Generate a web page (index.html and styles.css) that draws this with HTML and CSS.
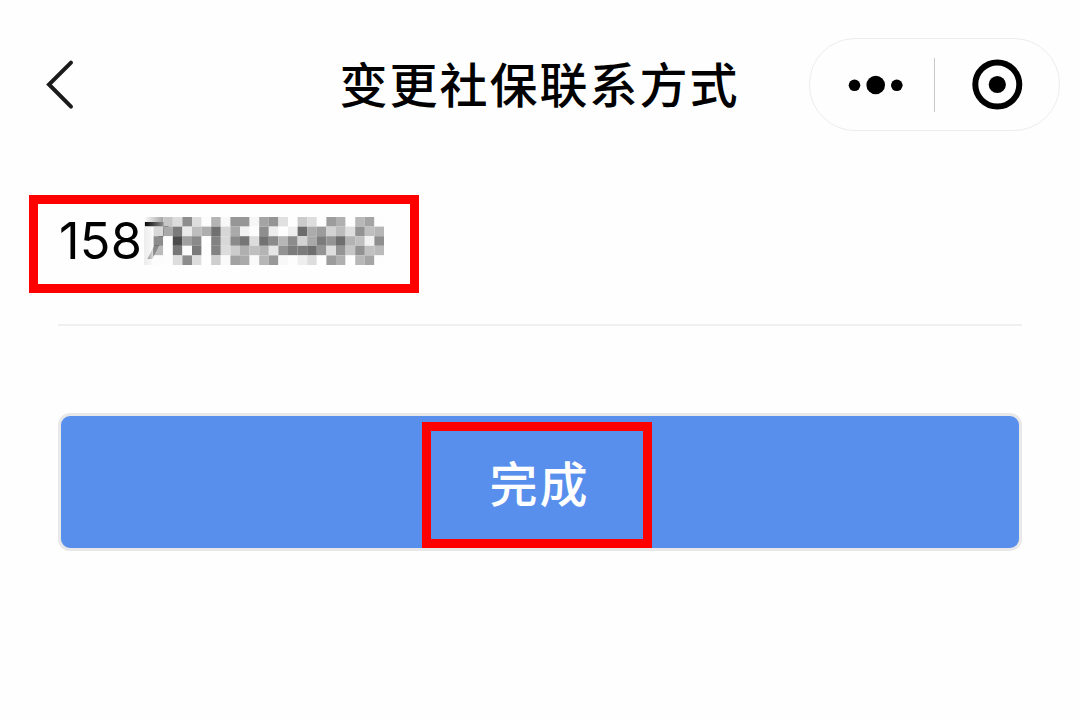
FILE: index.html
```html
<!DOCTYPE html>
<html lang="zh-CN">
<head>
    <meta charset="UTF-8">
    <meta name="viewport" content="width=device-width, initial-scale=1.0">
    <title>变更社保联系方式</title>
    <link rel="stylesheet" href="styles.css">
</head>
<body>
    <header class="navbar">
        <svg class="back" width="30" height="52" viewBox="0 0 30 52">
            <path d="M27 3.7 L5 25.5 L27 47.7" />
        </svg>
        <h1 class="title">变更社保联系方式</h1>
        <div class="capsule">
            <svg class="more" width="56" height="20" viewBox="0 0 56 20">
                <circle cx="6.5" cy="10.3" r="5.8" />
                <circle cx="27.7" cy="10" r="9.3" />
                <circle cx="48.8" cy="10.3" r="5.8" />
            </svg>
            <span class="divider"></span>
            <svg class="close" width="52" height="52" viewBox="0 0 52 52">
                <circle class="ring" cx="26.3" cy="25.5" r="22" />
                <circle cx="26.3" cy="25.5" r="8.6" />
            </svg>
        </div>
    </header>

    <main class="form">
        <div class="field">
            <div class="phone">
                <span class="digits">1587</span>
                <svg class="mosaic" id="mosaic" width="240" height="48" viewBox="0 0 240 48"></svg>
            </div>
        </div>
        <button class="submit"><span class="submit-label">完成</span></button>
    </main>

    <script>
        // gray level of every mosaic cell, "--" leaves the cell clear
        const rows = [
            "-- -- c6 dc 8e dd fd b4 f8 96 96 f6 a4 94 e0 fe cb dd fd 9c b0 fe b8 a4 fd",
            "-- d8 a9 7b ea bd ae 70 d6 aa f2 fd 8e ee fe ee 6c ab 9c d2 bc de 92 bf b6",
            "-- 8c fe 4c a0 8a fe 83 d8 8a 76 dc 72 8b b6 8c d3 a9 7c 94 6e b3 c0 f2 8e",
            "-- -- fe 78 fb 7a fe 83 dc cc b0 bf b4 e6 92 7b 7b 6e 94 de 94 c5 92 c0 ba",
            "-- fc fd dd 8c dd fe ce fa a2 aa fa b6 98 f8 fd ee dd fd 9c b0 fe b8 a5 fd"
        ];
        const size = 9.6;
        let cells = `
            <defs>
                <linearGradient id="fade">
                    <stop offset="0" stop-color="#999" stop-opacity="0" />
                    <stop offset="1" stop-color="#999" stop-opacity="0.9" />
                </linearGradient>
                <linearGradient id="edge">
                    <stop offset="0" stop-color="#ddd" stop-opacity="0.5" />
                    <stop offset="1" stop-color="#fff" stop-opacity="0.9" />
                </linearGradient>
            </defs>
            <rect x="0" y="9.6" width="9.6" height="38.4" fill="url(#edge)" />
            <rect x="0" y="0" width="19.2" height="9.6" fill="url(#fade)" />
            <rect x="9.6" y="28.8" width="9.6" height="9.6" fill="#aaa" fill-opacity="0.8" />`;

        rows.forEach((row, y) => {
            row.split(" ").forEach((c, x) => {
                if (c === "--") return;
                cells += `<rect x="${x * size}" y="${y * size}" width="${size}" height="${size}" fill="#${c}${c}${c}" />`;
            });
        });
        document.getElementById("mosaic").innerHTML = cells;
    </script>
</body>
</html>
```
FILE: styles.css
```css
* {
    box-sizing: border-box;
}

body {
    margin: 0;
    background-color: #fefefe;
    color: #000;
    font-family: Inter, "Noto Sans CJK SC", sans-serif;
}

.navbar {
    display: grid;
    grid-template-columns: 1fr auto 1fr;
    align-items: center;
    height: 93px;
    margin-top: 38px;
    padding: 0 20px 0 44px;
}

.back {
    fill: none;
    stroke: #1a1a1a;
    stroke-width: 4;
    stroke-linecap: round;
}

.title {
    margin: 0 0 6px -25px;
    font-family: "Noto Sans CJK SC", sans-serif;
    font-size: 48px;
    font-weight: 500;
    letter-spacing: 2px;
    line-height: 70px;
}

.capsule {
    display: flex;
    justify-content: space-between;
    align-items: center;
    justify-self: end;
    width: 251px;
    height: 93px;
    padding: 0 36px 0 38px;
    border: 1.5px solid #ededed;
    border-radius: 46px;
}

.divider {
    width: 1px;
    height: 54px;
    margin: 0 7px 0 0;
    background-color: #c8c8c8;
}

.ring {
    fill: none;
    stroke: #000;
    stroke-width: 6;
}

.form {
    padding: 64px 58px 0;
}

.field {
    height: 131px;
    border-bottom: 2px solid #f0f0f0;
}

/* red marks around the number and the button label */
.phone,
.submit-label {
    border: 9px solid #f00;
}

.phone {
    display: flex;
    align-items: center;
    width: 390px;
    height: 98px;
    margin-left: -29px;
    padding-left: 21px;
}

.digits {
    width: 85px;
    margin-top: -6px;
    font-size: 50.5px;
    letter-spacing: 0.3px;
    line-height: 60px;
    white-space: nowrap;
}

.mosaic {
    flex: none;
    margin-top: -6px;
}

.submit {
    display: flex;
    justify-content: center;
    align-items: flex-end;
    width: 964px;
    height: 138px;
    margin-top: 87px;
    padding: 0;
    border: 3px solid #e8e8e8;
    border-radius: 12px;
    background-color: #588fed;
    color: #fff;
}

.submit-label {
    width: 230px;
    height: 126px;
    margin-right: 6px;
    padding-left: 5px;
    font-family: "Noto Sans CJK SC", sans-serif;
    font-size: 48px;
    font-weight: 500;
    letter-spacing: 2px;
    line-height: 101px;
}
```
